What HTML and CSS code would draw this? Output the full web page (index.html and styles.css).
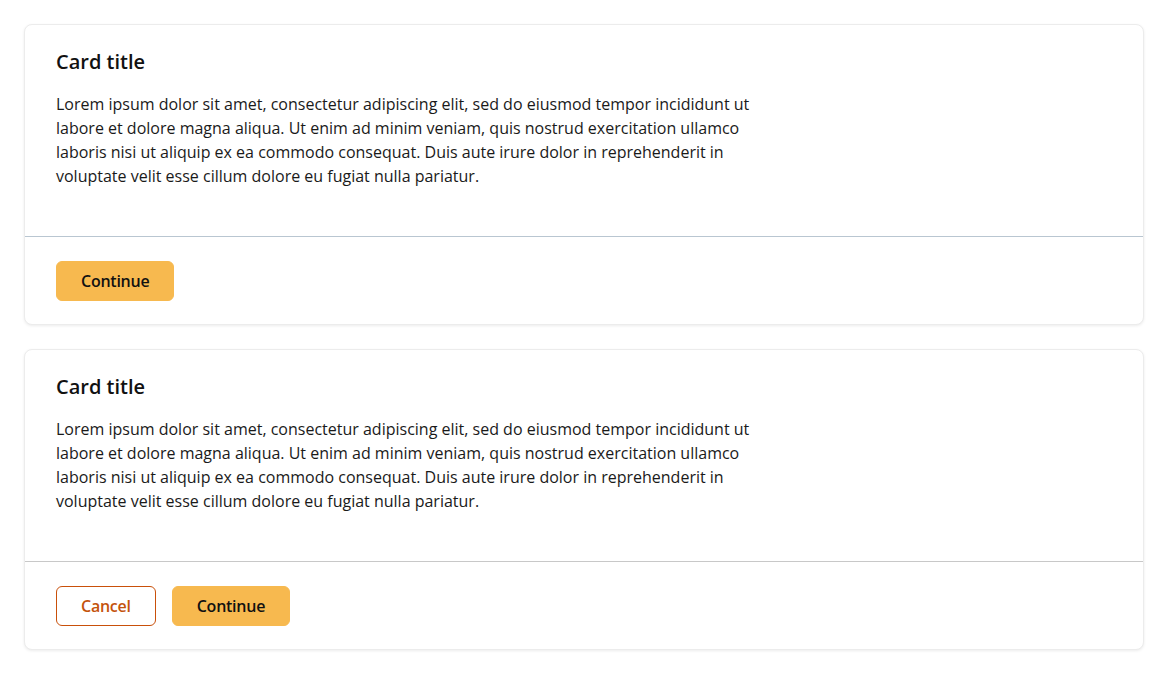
FILE: index.html
```html
<!DOCTYPE html>
<html lang="en">
<head>
<meta charset="utf-8">
<title>Cards</title>
<link rel="stylesheet" href="styles.css">
</head>
<body>
<main class="stack">
  <section class="card">
    <div class="card-body">
      <h2 class="card-title">Card title</h2>
      <p class="card-text">Lorem ipsum dolor sit amet, consectetur adipiscing elit, sed do eiusmod tempor incididunt ut labore et dolore magna aliqua. Ut enim ad minim veniam, quis nostrud exercitation ullamco laboris nisi ut aliquip ex ea commodo consequat. Duis aute irure dolor in reprehenderit in voluptate velit esse cillum dolore eu fugiat nulla pariatur.</p>
    </div>
    <div class="card-footer">
      <button class="btn btn-primary" type="button">Continue</button>
    </div>
  </section>
  <section class="card">
    <div class="card-body">
      <h2 class="card-title">Card title</h2>
      <p class="card-text">Lorem ipsum dolor sit amet, consectetur adipiscing elit, sed do eiusmod tempor incididunt ut labore et dolore magna aliqua. Ut enim ad minim veniam, quis nostrud exercitation ullamco laboris nisi ut aliquip ex ea commodo consequat. Duis aute irure dolor in reprehenderit in voluptate velit esse cillum dolore eu fugiat nulla pariatur.</p>
    </div>
    <div class="card-footer card-footer-alt">
      <button class="btn btn-outline" type="button">Cancel</button>
      <button class="btn btn-primary" type="button">Continue</button>
    </div>
  </section>
</main>
</body>
</html>
```
FILE: styles.css
```css
* { box-sizing: border-box; }
html, body { margin: 0; padding: 0; background: #ffffff; }
body {
  font-family: "Open Sans", "Noto Sans", sans-serif;
  color: #1a1a1a;
  padding: 24px;
}
.stack {
  display: flex;
  flex-direction: column;
  gap: 24px;
}
.card {
  background: #fff;
  border: 1px solid #ececec;
  border-radius: 8px;
  box-shadow: 0 1px 3px rgba(0, 0, 0, 0.08);
}
.card-body {
  padding: 23px 31px 48px;
}
.card-title {
  margin: 0 0 16px;
  font-size: 20px;
  line-height: 28px;
  font-weight: 600;
  color: #111;
}
.card-text {
  margin: 0;
  max-width: 700px;
  font-size: 16px;
  line-height: 24px;
  color: #1a1a1a;
}
.card-footer {
  border-top: 1px solid #b9c6d1;
  padding: 24px 31px 23px;
  display: flex;
  gap: 16px;
}
.card-footer-alt { border-top-color: #c8c8c8; }
.btn {
  height: 40px;
  padding: 0 24px;
  border-radius: 6px;
  font-family: inherit;
  font-size: 16px;
  font-weight: 600;
  letter-spacing: -0.25px;
  cursor: pointer;
}
.btn-primary {
  background: #f7b94f;
  border: 1px solid #f7b94f;
  color: #111;
}
.btn-outline {
  background: #fff;
  border: 1px solid #c9500a;
  color: #c4530c;
}
```
